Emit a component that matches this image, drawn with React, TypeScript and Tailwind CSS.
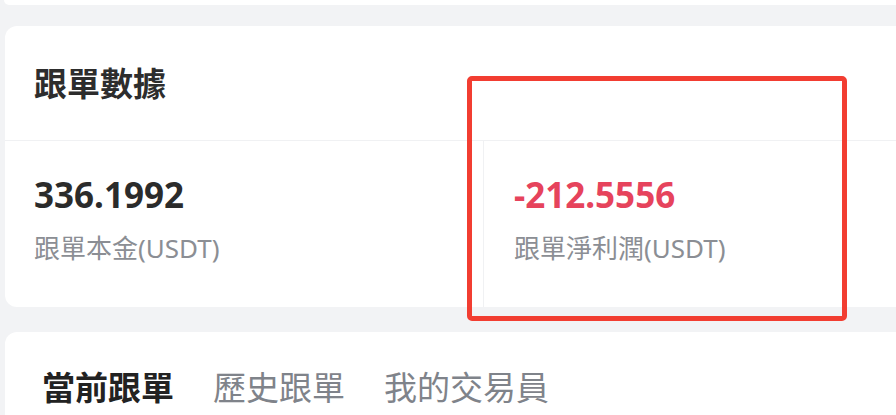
import React from 'react';

const font = { fontFamily: '"Noto Sans", "Noto Sans CJK TC", sans-serif' };

const Stat: React.FC<{ value: string; label: string; negative?: boolean }> = ({ value, label, negative }) => (
  <div className="flex flex-col pt-[34px]">
    <span
      className={`text-[35px] leading-[40px] font-bold ${negative ? 'text-[#e6435c]' : 'text-[#2b2b2b]'}`}
    >
      {value}
    </span>
    <span className="mt-[18px] text-[26px] leading-[30px] text-[#8b8e94]">{label}</span>
  </div>
);

const App: React.FC = () => {
  const tabs = ['當前跟單', '歷史跟單', '我的交易員'];

  return (
    <div className="relative w-[896px] h-[415px] overflow-hidden bg-[#f2f3f5]" style={font}>
      {/* card above, mostly scrolled out */}
      <div className="ml-[4px] h-[5px] bg-white rounded-bl-[12px]" />

      {/* follow data card */}
      <div className="ml-[5px] mt-[21px] h-[281px] bg-white rounded-l-[12px] flex flex-col">
        <div className="h-[115px] flex items-center pl-[29px] border-b border-[#f0f1f3]">
          <h2 className="text-[33px] leading-none font-bold text-[#2d2d2d]">跟單數據</h2>
        </div>
        <div className="flex flex-1">
          <div className="w-[479px] pl-[29px] border-r border-[#f0f1f3]">
            <Stat value="336.1992" label="跟單本金(USDT)" />
          </div>
          <div className="flex-1 pl-[30px]">
            <Stat value="-212.5556" label="跟單淨利潤(USDT)" negative />
          </div>
        </div>
      </div>

      {/* tabs card */}
      <div className="ml-[5px] mt-[25px] h-[100px] bg-white rounded-tl-[12px] pl-[37px] pt-[38px]">
        <div className="flex gap-[39px] text-[33px] leading-[36px]">
          {tabs.map((t, i) => (
            <span key={t} className={i === 0 ? 'font-bold text-[#222222]' : 'text-[#7f838a]'}>
              {t}
            </span>
          ))}
        </div>
      </div>

      {/* annotation */}
      <div className="absolute left-[467px] top-[76px] w-[380px] h-[245px] border-[5px] border-[#f23d31] rounded-[5px]" />
    </div>
  );
};

export default App;
